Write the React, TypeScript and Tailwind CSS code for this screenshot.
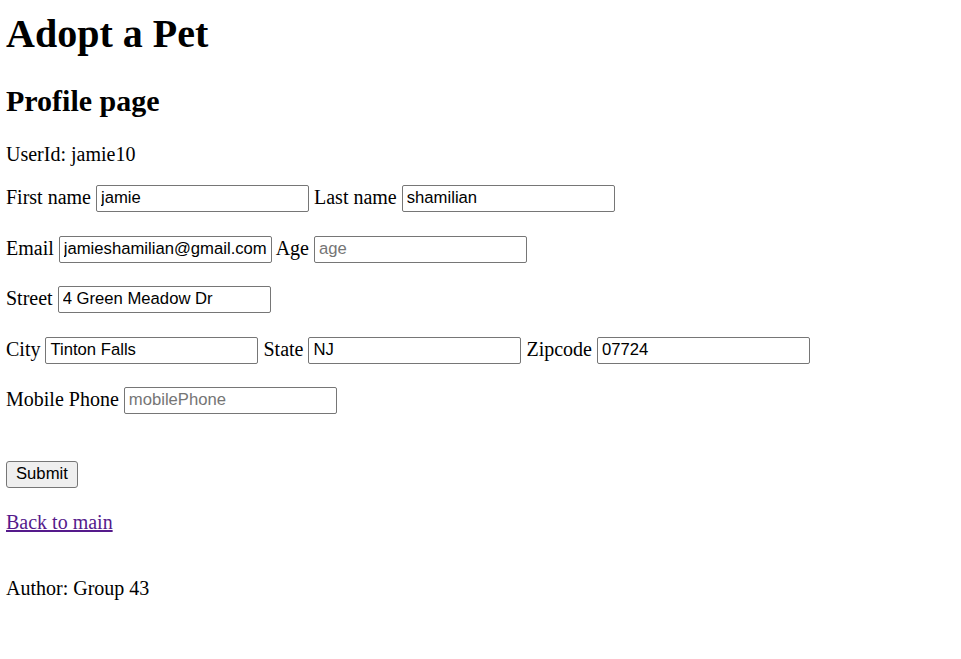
import type { ReactNode } from 'react'

const inputClass =
  "h-[27px] w-[213px] rounded-[2px] border border-[#767676] bg-white px-[4px] align-baseline font-['Liberation_Sans',Arial,sans-serif] text-[16.67px] text-black placeholder:text-[#757575] outline-none"

function Field({ label, value, placeholder }: { label: string; value?: string; placeholder?: string }) {
  return (
    <>
      {label}{' '}
      <input className={inputClass} defaultValue={value} placeholder={placeholder} />
    </>
  )
}

function Row({ className, children }: { className: string; children: ReactNode }) {
  return <div className={`h-[27px] whitespace-nowrap leading-[23px] ${className}`}>{children}</div>
}

export default function App() {
  return (
    <div className="min-h-screen bg-white pl-[6px] pt-[11px] font-['Liberation_Serif','Times_New_Roman',serif] text-[20px] text-black">
      <h1 className="text-[40px] font-bold leading-[46px]">Adopt a Pet</h1>
      <h2 className="mt-[26.8px] text-[30px] font-bold leading-[34.5px]">Profile page</h2>
      <p className="mt-[24.9px] leading-[23px]">UserId: jamie10</p>

      <form onSubmit={(e) => e.preventDefault()}>
        <Row className="mt-[18.8px]">
          <Field label="First name" value="jamie" />{' '}
          <Field label="Last name" value="shamilian" />
        </Row>
        <Row className="mt-[24px]">
          <Field label="Email" value="jamieshamilian@gmail.com" />{' '}
          <Field label="Age" placeholder="age" />
        </Row>
        <Row className="mt-[23px]">
          <Field label="Street" value="4 Green Meadow Dr" />
        </Row>
        <Row className="mt-[24px]">
          <Field label="City" value="Tinton Falls" />{' '}
          <Field label="State" value="NJ" />{' '}
          <Field label="Zipcode" value="07724" />
        </Row>
        <Row className="mt-[23px]">
          <Field label="Mobile Phone" placeholder="mobilePhone" />
        </Row>

        <div className="mt-[47px] flex">
          <button
            type="submit"
            className="h-[27px] rounded-[3px] border border-[#767676] bg-[#efefef] px-[9px] font-['Liberation_Sans',Arial,sans-serif] text-[16.67px] leading-none text-black"
          >
            Submit
          </button>
        </div>
      </form>

      <p className="mt-[23px] leading-[23px]">
        <a href="#" className="text-[#551a8b] underline">
          Back to main
        </a>
      </p>
      <p className="mt-[42.7px] leading-[23px]">Author: Group 43</p>
    </div>
  )
}
